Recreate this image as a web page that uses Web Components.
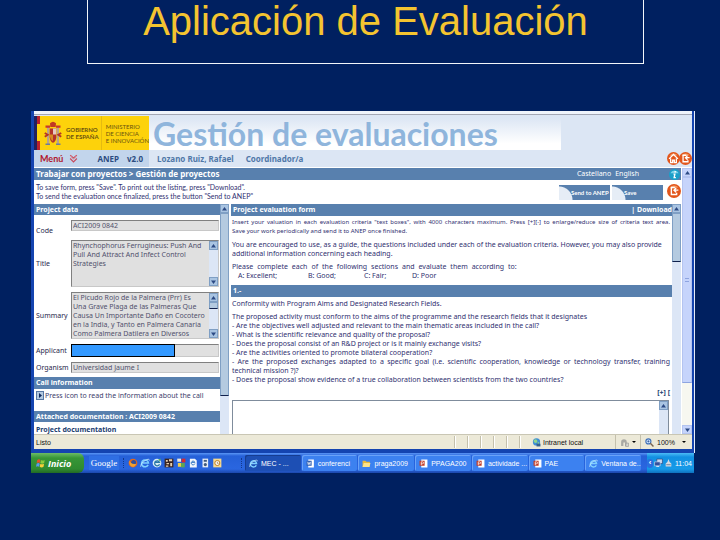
<!DOCTYPE html>
<html lang="es">
<head>
<meta charset="utf-8">
<title>Aplicación de Evaluación</title>
<style>
  body {
    margin: 0;
    min-height: 100vh;
    background: #002060;
    font-family: "Noto Sans", sans-serif;
    overflow: hidden;
  }
</style>
</head>
<body>
<evaluation-slide></evaluation-slide>

<script>
const define = (name, html, setup) => {
  const template = document.createElement('template');
  template.innerHTML = html;
  customElements.define(name, class extends HTMLElement {
    constructor() {
      super();
      this.attachShadow({ mode: 'open' });
      this.shadowRoot.appendChild(template.content.cloneNode(true));
    }
    connectedCallback() {
      if (setup) setup(this, this.shadowRoot);
    }
  });
};

/* ---------- icons ---------- */

const ICONS = {
  home: '<circle cx="8" cy="8" r="8" fill="#e2561b"/><path d="M3 5a6 6 0 0 1 10-1z" fill="#f59a62"/><path d="M2.500 8.500L8 3l5.500 5.500M4.500 8v5H7v-3h2v3h2.500V8" fill="none" stroke="#fff" stroke-width="1.600"/>',
  exit: '<circle cx="8" cy="8" r="8" fill="#e2561b"/><path d="M3 5a6 6 0 0 1 10-1z" fill="#f59a62"/><path d="M9 4H5v8h6v-2M13 7H8m2.500-2.500L8 7l2.500 2.500" fill="none" stroke="#fff" stroke-width="1.600"/>',
  info: '<circle cx="8" cy="8" r="8" fill="#1b9fc9"/><path d="M2 6a6.500 6.500 0 0 1 12 0z" fill="#7fd3ea"/><path d="M9 3v2M6.500 7.500H8.500L7.500 12.500H10" fill="none" stroke="#fff" stroke-width="2"/>',
  globe: '<circle cx="8" cy="7" r="6.500" fill="#3f8fd6"/><path d="M3 4q4-4 6 0t-3 5q-4-1-3-5zM10 8l3-1-1 4-2 1z" fill="#8fd68a"/><path d="M8 10h7v5H8z" fill="#35618f"/>',
  mouse: '<path d="M2 14V7a5 5 0 0 1 10 0v7H9V8H6v6z" fill="#a9a9a4"/><path d="M11 9h4v6h-5z" fill="#d8d8d2" stroke="#888" stroke-width="1"/>',
  lens: '<circle cx="6" cy="6" r="4.500" fill="#cfe6ff" stroke="#4070b8" stroke-width="2"/><path d="M9.500 9.500L15 15" stroke="#7a6450" stroke-width="2.500"/><path d="M6 4v4M4 6h4" stroke="#204890" stroke-width="1.200"/>',
  firefox: '<circle cx="8" cy="8" r="7" fill="#e2661c"/><circle cx="9" cy="7" r="4" fill="#31509c"/><path d="M2 4q3 7 11 5-1 5-6 5-5-1-5-10z" fill="#f3a130"/>',
  ie: '<path d="M13 11a5.500 5.500 0 1 1 .5-3H4" fill="none" stroke="#7fd0ff" stroke-width="2.500"/><path d="M1 14Q0 9 8 4q7-4 7 0" fill="none" stroke="#c8ecff" stroke-width="1.300"/>',
  mail: '<circle cx="8" cy="8" r="7" fill="#d9edf5"/><path d="M12 10a4 4 0 1 1 0-3H5" fill="none" stroke="#2a78a8" stroke-width="2"/><path d="M10 2l4-1-1 5z" fill="#58b058"/>',
  grid: '<path d="M1 1h14v14H1z" fill="#3a2420"/><path d="M3 3h3v3H3zM8 2h5v3H8zM4 8h4v2H4zM10 8h3v5h-3zM3 12h4v2H3z" fill="#e8d0b0"/>',
  puzzle: '<path d="M2 1h6v5H2z" fill="#ece9dc"/><path d="M9 1h6v6H9z" fill="#d8292f"/><path d="M3 8h5v6H3z" fill="#f0cf4a"/><path d="M8 8h6v7H8z" fill="#5fa553"/>',
  page: '<path d="M3 1h8l3 3v11H3z" fill="#f4f7fb"/><path d="M11 9a3 3 0 1 1 0-2H6" fill="none" stroke="#2a70c0" stroke-width="1.500"/>',
  pod: '<path d="M4 1h9v14H4z" fill="#e8edf4"/><path d="M6 3h5v3H6z" fill="#41597c"/><circle cx="8.500" cy="10.500" r="2.500" fill="#41597c"/>',
  outlook: '<path d="M2 1h13v14H2z" fill="#f7d98f"/><circle cx="8.500" cy="8" r="4" fill="#fff" stroke="#b87818" stroke-width="1.500"/><path d="M8.500 6v2.500h2" fill="none" stroke="#805010"/>',
  word: '<path d="M4 1h10v14H4z" fill="#fff"/><path d="M1 3h9v9H1z" fill="#2e5db0"/><path d="M3 5l1 5 1.500-4L7 10l1-5" fill="none" stroke="#fff" stroke-width="1.200"/>',
  folder: '<path d="M1 3h5l2 2h6v9H1z" fill="#e8b93a"/><path d="M3 7h12l-2 7H1z" fill="#fbe28a"/>',
  slides: '<path d="M4 1h11v14H4z" fill="#fff"/><path d="M1 3h9v9H1z" fill="#c23a24"/><path d="M4 11V5h2.500a1.700 1.700 0 0 1 0 3.400H4" fill="none" stroke="#fff" stroke-width="1.300"/>',
  flag: '<path d="M2 3q3-2 5 0L6 8Q4 6 1 8z" fill="#e8502a"/><path d="M8 3q3 2 6 0l-1 5q-3 2-6 0z" fill="#8bcb3c"/><path d="M1 9q3-2 5 0l-1 5q-2-2-5 0z" fill="#5a9af0"/><path d="M7 9q3 2 6 0l-1 5q-3 2-6 0z" fill="#f8cf3a"/>',
  monitors: '<path d="M5 1h10v8H5z" fill="#c8d8f0" stroke="#203068"/><path d="M1 6h10v7H1z" fill="#33509c" stroke="#dce6f8"/><path d="M4 14h5" stroke="#dce6f8" stroke-width="2"/>',
  usb: '<path d="M8 1l2 5 3 3v5H3V9l3-3z" fill="#d4dbe4"/><path d="M4 11h8" stroke="#7e8ca0" stroke-width="2"/>',
  chevrons: '<path d="M2 2l6 5 6-5M2 8l6 6 6-6" fill="none" stroke="#c84a5c" stroke-width="2"/><path d="M4 2v4l4 3 4-3V2" fill="none" stroke="#d98a94" stroke-width="1.500"/>',
  crest: '<path d="M4 4h1.500v12H4zM10.500 4H12v12h-1.500z" fill="#b9a38c"/><path d="M3 3h3v1.500H3zM10 3h3v1.500h-3z" fill="#c9372c"/><path d="M3 15h3v1H3zM10 15h3v1h-3z" fill="#6a7c9c"/><path d="M6 1.500q2-2 4 0L9.800 4H6.200z" fill="#c23a24"/><path d="M5.800 5h4.400v6q-.5 3-2.200 3.500-1.700-.5-2.200-3.500z" fill="#b3322a"/><path d="M8 5h2.200v4H8z" fill="#e6c9c0"/><path d="M5.800 9H8v4.500Q6 12.500 5.800 9z" fill="#d78a20"/><path d="M2.500 8l2 1.200-2 1.300M13.500 8l-2 1.200 2 1.300" fill="none" stroke="#b3322a" stroke-width="1.200"/>',
};

define('ui-icon', `
  <style>
    :host { display: inline-flex; flex: none; width: 10px; height: 10px; }
    svg { width: 100%; height: 100%; display: block; }
  </style>
  <svg viewBox="0 0 16 16" aria-hidden="true"></svg>
`, (el, root) => {
  root.querySelector('svg').innerHTML = ICONS[el.getAttribute('name')] || '';
});

/* ---------- scrollbar ---------- */

// "thumb" is the share of the track the thumb takes, e.g. "80%"
define('scroll-strip', `
  <style>
    :host {
      display: flex;
      flex-direction: column;
      flex: none;
      width: 9px;
      background: var(--track, #dce6f6);
    }
    button {
      flex: none;
      height: 9px;
      padding: 0;
      border: 1px solid var(--edge, #7f9fc4);
      background: var(--face, #a9c4e2);
      display: flex;
      align-items: center;
      justify-content: center;
    }
    svg { width: 5px; height: 4px; }
    .track { flex: 1; min-height: 0; }
    .thumb {
      box-sizing: border-box;
      background: var(--thumb, #b4cae0);
      border: 1px solid var(--edge, #7f9fc4);
      border-bottom-color: var(--thumb-end, #10204c);
      display: flex;
      flex-direction: column;
      align-items: center;
      justify-content: center;
    }
    .thumb::after {
      content: "";
      width: 4px;
      height: 2px;
      border-top: 1px solid #8ea4e0;
      border-bottom: 1px solid #8ea4e0;
      display: var(--grip, none);
    }
  </style>
  <button type="button" aria-label="Subir"><svg viewBox="0 0 5 4"><path d="M0 3.500L2.500 0 5 3.500z" fill="#2c4a84"/></svg></button>
  <div class="track"><div class="thumb"></div></div>
  <button type="button" aria-label="Bajar"><svg viewBox="0 0 5 4"><path d="M0 .5L2.500 4 5 .5z" fill="#2c4a84"/></svg></button>
`, (el, root) => {
  const thumb = root.querySelector('.thumb');
  if (el.hasAttribute('thumb')) thumb.style.height = el.getAttribute('thumb');
  else thumb.remove();
  if (el.hasAttribute('cut')) root.querySelector('button:last-of-type').remove();
});

/* ---------- banner ---------- */

define('gov-logo', `
  <style>
    :host {
      display: flex;
      flex: none;
      align-items: center;
      width: 115px;
      height: 34px;
      background: #fdd20b;
      color: #6b5310;
      font: 6px/7px "Lato", sans-serif;
    }
    .eu { width: 3px; align-self: stretch; background: #23205c; }
    .es { width: 3px; align-self: stretch; background: linear-gradient(#b8202c 25%, #fdd20b 25% 75%, #b8202c 75%); }
    ui-icon { width: 24px; height: 24px; margin: 0 1px; }
    .gov { font-weight: bold; width: 35px; white-space: nowrap; }
    .min { border-left: 1px solid #e5bb10; align-self: stretch; padding-left: 4px; display: flex; align-items: center; white-space: nowrap; }
  </style>
  <span class="eu"></span><span class="es"></span>
  <ui-icon name="crest"></ui-icon>
  <span class="gov">GOBIERNO<br>DE ESPAÑA</span>
  <span class="min"><span>MINISTERIO<br>DE CIENCIA<br>E INNOVACIÓN</span></span>
`);

define('page-banner', `
  <style>
    :host { display: block; background: #dce6f4; border-top: 3px solid #eff4fb; }
    .top { display: flex; align-items: flex-end; height: 36px; border-top: 1px solid #a3a7b4; box-sizing: border-box; }
    h2 {
      margin: 0;
      width: 408px;
      padding-left: 4px;
      font: bold 32px/32px "Lato", sans-serif;
      color: #8fb5dc;
      background: linear-gradient(#dce6f4, #fff 80%);
      white-space: nowrap;
    }
    .bar { display: flex; align-items: center; height: 18px; border-bottom: 1px solid #fff; box-sizing: border-box; font-size: 8px; font-weight: bold; color: #5078a8; }
    .menu { display: flex; align-items: center; box-sizing: border-box; width: 115px; align-self: stretch; background: #c2d5ec; padding: 0 6px; color: #2c4c80; }
    .menu button { display: flex; align-items: center; gap: 6px; border: 0; padding: 0; margin-right: auto; background: none; color: #b0182c; font: bold 9px "Lato", sans-serif; }
    .menu button ui-icon { width: 9px; height: 9px; }
    .menu span + span { margin-left: 8px; }
    .user { padding-left: 8px; }
    .role { padding-left: 12px; }
    .tools { margin-left: auto; display: flex; padding-right: 1px; }
    .tools a, .tools ui-icon { display: block; width: 13px; height: 13px; }
    .tools a { width: 12px; }
  </style>
  <div class="top"><gov-logo></gov-logo><h2>Gestión de evaluaciones</h2></div>
  <div class="bar">
    <div class="menu"><button type="button">Menú <ui-icon name="chevrons"></ui-icon></button><span>ANEP</span><span>v2.0</span></div>
    <span class="user">Lozano Ruiz, Rafael</span><span class="role">Coordinador/a</span>
    <div class="tools">
      <a href="#home" aria-label="Inicio"><ui-icon name="home"></ui-icon></a>
      <a href="#exit" aria-label="Salir"><ui-icon name="exit"></ui-icon></a>
    </div>
  </div>
`);

define('crumb-bar', `
  <style>
    :host { display: flex; align-items: center; height: 12px; background: #5880ae; color: #fff; font-size: 8px; line-height: 12px; padding: 0 1px 0 2px; }
    b { flex: 1; }
    a { color: #fff; text-decoration: none; margin-right: 4px; font-size: 7px; }
    ui-icon { width: 11px; height: 11px; margin-left: 26px; }
  </style>
  <b>Trabajar con proyectos &gt; Gestión de proyectos</b>
  <a href="#es">Castellano</a><a href="#en">English</a>
  <ui-icon name="info"></ui-icon>
`);

define('action-bar', `
  <style>
    :host { display: flex; align-items: center; height: 24px; color: #303070; font: 7px/9px "Lato", sans-serif; }
    p { flex: 1; margin: 0; padding: 0 0 0 2px; }
    button {
      width: 51px;
      height: 15px;
      margin-right: 2px;
      padding: 0 0 0 12px;
      border: 0;
      color: #fff;
      font: bold 6px/15px "Lato", sans-serif;
      text-align: left;
      white-space: nowrap;
      background: radial-gradient(circle at 0 100%, #e6edf6 13px, #5880ae 14px);
    }
    ui-icon { width: 14px; height: 14px; margin: 0 0 3px 2px; }
  </style>
  <p>To save form, press "Save". To print out the listing, press "Download".<br>To send the evaluation once finalized, press the button "Send to ANEP"</p>
  <button type="button">Send to ANEP</button>
  <button type="button">Save</button>
  <ui-icon name="exit"></ui-icon>
`);

/* ---------- panels ---------- */

define('panel-heading', `
  <style>
    :host { display: flex; justify-content: space-between; background: #5880ae; color: #fff; font-weight: bold; font-size: 7px; line-height: 12px; padding: 0 0 0 2px; white-space: nowrap; overflow: hidden; }
  </style>
  <slot></slot>
`);

define('form-field', `
  <style>
    :host { display: flex; align-items: center; padding: 0 1px 0 2px; color: #28284c; }
    label { flex: none; width: 35px; }
    .box { flex: 1; min-width: 0; display: flex; background: #e0e0e0; border: 1px solid #c8c8c8; border-top-color: #808080; border-left-color: #808080; }
    input, textarea {
      flex: 1;
      min-width: 0;
      box-sizing: border-box;
      margin: 0;
      padding: 0 0 0 1px;
      border: 0;
      background: none;
      color: #50506c;
      font: inherit;
      line-height: 9px;
    }
    input { height: 9px; }
    textarea { height: 45px; resize: none; overflow: hidden; white-space: pre; }
    .masked { background: #3399ff; outline: 1px solid #000; width: 70%; flex: none; height: 11px; }
    :host([low]) label { padding-top: 10px; }
  </style>
  <label for="f"></label>
  <div class="box"></div>
`, (el, root) => {
  const kind = el.getAttribute('kind') || 'input';
  const box = root.querySelector('.box');
  root.querySelector('label').textContent = el.getAttribute('label');
  const field = document.createElement(kind === 'area' ? 'textarea' : 'input');
  field.id = 'f';
  field.value = el.getAttribute('value') || '';
  if (kind === 'masked') field.className = 'masked';
  box.appendChild(field);
  if (kind === 'area') {
    const strip = document.createElement('scroll-strip');
    if (el.hasAttribute('thumb')) strip.setAttribute('thumb', el.getAttribute('thumb'));
    box.appendChild(strip);
  }
});

define('project-data', `
  <style>
    :host { display: flex; flex-direction: column; flex: 0 0 186px; min-width: 0; overflow: hidden; font-size: 7px; line-height: 9px; }
    .fields { display: flex; flex-direction: column; gap: 5px; padding: 1px 0 4px; }
    .call { display: flex; align-items: center; gap: 1px; padding: 2px 2px 11px; color: #40406c; }
    .call button { width: 8px; height: 9px; padding: 0; border: 1px solid #5878a4; background: #b4cae0; display: flex; align-items: center; justify-content: center; }
    .call svg { width: 3px; height: 5px; }
    h4 { margin: 0; padding: 3px 2px 0; font-size: 7px; line-height: 9px; color: #1c4070; }
  </style>
  <panel-heading>Project data</panel-heading>
  <div class="fields">
    <form-field low label="Code" value="ACI2009 0842"></form-field>
    <form-field kind="area" label="Title" value="Rhynchophorus Ferrugineus: Push And
Pull And Attract And Infect Control
Strategies"></form-field>
    <form-field kind="area" thumb="25%" label="Summary" value="El Picudo Rojo de la Palmera (Prr) Es
Una Grave Plaga de las Palmeras Que
Causa Un Importante Daño en Cocotero
en la India, y Tanto en Palmera Canaria
Como Palmera Datilera en Diversos"></form-field>
    <form-field kind="masked" label="Applicant"></form-field>
    <form-field label="Organism" value="Universidad Jaume I"></form-field>
  </div>
  <panel-heading>Call information</panel-heading>
  <div class="call">
    <button type="button" aria-label="Open"><svg viewBox="0 0 3 5"><path d="M0 0l3 2.500L0 5z" fill="#10285c"/></svg></button>
    Press icon to read the information about the call
  </div>
  <panel-heading>Attached documentation : ACI2009 0842</panel-heading>
  <h4>Project documentation</h4>
`);

define('evaluation-form', `
  <style>
    :host { display: flex; flex-direction: column; flex: 1; min-width: 0; overflow: hidden; font-size: 7px; line-height: 9px; color: #303070; }
    p { margin: 0 0 4px; padding: 0 2px 0 1px; white-space: nowrap; }
    p.last { margin: 0; }
    .intro { padding-top: 2px; }
    .tight { font-size: 6px; }
    .fill { display: block; text-align: justify; text-align-last: justify; }
    .short { width: 65%; }
    .grades { display: flex; padding: 0 7px 5px; }
    .grades span { flex: 0 0 56px; }
    .grades span:first-child { flex-basis: 70px; }
    .grades span:nth-child(3) { flex-basis: 48px; }
    .body { padding-top: 2px; }
    .size { align-self: flex-end; margin: 4px 2px 0 0; border: 0; padding: 0; background: none; color: #1c4070; font: bold 7px/9px "Noto Sans", sans-serif; }
    .answer { flex: 1; min-height: 0; display: flex; margin: 3px 3px 0 1px; border: 1px solid #7f8c9c; border-bottom: 0; }
    textarea { flex: 1; min-width: 0; border: 0; padding: 0; resize: none; overflow: hidden; background: #fff; }
    a { color: #fff; text-decoration: none; }
  </style>
  <panel-heading><span>Project evaluation form</span><a href="#download">| Download</a></panel-heading>
  <div class="intro">
    <p class="tight"><span class="fill">Insert your valuation in each evaluation criteria "text boxes", with 4000 characters maximum. Press [+][-] to enlarge/reduce size of criteria text area.</span>Save your work periodically and send it to ANEP once finished.</p>
    <p>You are encouraged to use, as a guide, the questions included under each of the evaluation criteria. However, you may also provide<br>additional information concerning each heading.</p>
    <p class="last"><span class="fill short">Please complete each of the following sections and evaluate them according to:</span></p>
    <div class="grades"><span>A: Excellent;</span><span>B: Good;</span><span>C: Fair;</span><span>D: Poor</span></div>
  </div>
  <panel-heading>1.-</panel-heading>
  <div class="body">
    <p>Conformity with Program Aims and Designated Research Fields.</p>
    <p class="last">The proposed activity must conform to the aims of the programme and the research fields that it designates<br>
    - Are the objectives well adjusted and relevant to the main thematic areas included in the call?<br>
    - What is the scientific relevance and quality of the proposal?<br>
    - Does the proposal consist of an R&amp;D project or is it mainly exchange visits?<br>
    - Are the activities oriented to promote bilateral cooperation?<br>
    <span class="fill">- Are the proposed exchanges adapted to a specific goal (i.e. scientific cooperation, knowledge or technology transfer, training</span>
    technical mission ?)?<br>
    - Does the proposal show evidence of a true collaboration between scientists from the two countries?</p>
  </div>
  <button class="size" type="button">[+] [</button>
  <div class="answer"><textarea aria-label="1.-"></textarea><scroll-strip cut></scroll-strip></div>
`);

/* ---------- browser window ---------- */

define('status-bar', `
  <style>
    :host { display: flex; align-items: center; height: 15px; padding: 0 2px; background: #ece9d8; border-top: 1px solid #c9c6b4; box-sizing: border-box; color: #101010; font: 7px/9px "Liberation Sans", sans-serif; }
    .cells { flex: 1; display: flex; justify-content: flex-end; align-self: stretch; padding: 1px 0; }
    .cells i { width: 12px; border-left: 1px solid #c4c0ac; box-shadow: inset 1px 0 #fff; }
    .zone { width: 83px; display: flex; gap: 2px; align-items: center; }
    .item { display: flex; align-items: center; gap: 3px; padding-left: 4px; border-left: 1px solid #c4c0ac; align-self: stretch; }
    .item:last-child { width: 45px; margin-left: 4px; }
    .arrow { border: 2px solid transparent; border-top-color: #000; margin-top: 2px; }
    .item:last-child .arrow { margin-left: 4px; }
    ui-icon { width: 9px; height: 9px; }
  </style>
  <span>Listo</span>
  <div class="cells"><i></i><i></i><i></i><i></i><i></i><i></i></div>
  <div class="zone"><ui-icon name="globe"></ui-icon>Intranet local</div>
  <div class="item"><ui-icon name="mouse"></ui-icon><span class="arrow"></span></div>
  <div class="item"><ui-icon name="lens"></ui-icon>100%<span class="arrow"></span></div>
`);

define('browser-window', `
  <style>
    :host { display: block; border: solid #1444b0; border-width: 0 2px 4px 3px; box-shadow: 1px 0 #e8eefa; background: #fff; }
    .main { display: flex; }
    .content { flex: 1; min-width: 0; }
    .panes { display: flex; height: 230px; }
    .outer { --track: #f7f7f0; --face: #c6d4fb; --edge: #b4c4f0; --thumb: #c6d4fb; --thumb-end: #8ea4e0; --grip: block; width: 10px; margin-left: 1px; }
    .left { margin-right: 2px; }
  </style>
  <page-banner></page-banner>
  <div class="main">
    <div class="content">
      <crumb-bar></crumb-bar>
      <action-bar></action-bar>
      <div class="panes">
        <project-data></project-data>
        <scroll-strip class="left" thumb="83%" cut></scroll-strip>
        <evaluation-form></evaluation-form>
        <scroll-strip thumb="22%" cut></scroll-strip>
      </div>
    </div>
    <scroll-strip class="outer" thumb="83%"></scroll-strip>
  </div>
  <status-bar></status-bar>
`);

/* ---------- taskbar ---------- */

define('task-button', `
  <style>
    :host { display: block; flex: 1; min-width: 0; }
    button { display: flex; align-items: center; gap: 3px; width: 100%; height: 16px; padding: 0 4px; border: 0; border-radius: 2px; background: #3c81f0; box-shadow: inset 1px 1px #6aa2f8; color: #fff; font: 7px "Liberation Sans", sans-serif; white-space: nowrap; overflow: hidden; }
    :host([active]) button { background: #1d4fb4; box-shadow: inset 1px 1px #163d90; }
    ui-icon { width: 9px; height: 9px; }
  </style>
  <button type="button"><ui-icon></ui-icon><slot></slot></button>
`, (el, root) => {
  const icon = document.createElement('ui-icon');
  icon.setAttribute('name', el.getAttribute('icon'));
  root.querySelector('ui-icon').replaceWith(icon);
});

define('task-bar', `
  <style>
    :host { display: flex; align-items: center; height: 20px; background: linear-gradient(#5a96f6, #2560d8 15%, #2a66e0 80%, #1c48ac); color: #fff; }
    .start { align-self: stretch; width: 53px; padding: 0 0 0 5px; border: 0; border-radius: 0 6px 6px 0; background: linear-gradient(#6cbc66, #379637 25%, #2f8a30 80%, #226a24); color: #fff; display: flex; align-items: center; gap: 2px; font: italic bold 9px "Open Sans", sans-serif; }
    .google { margin-left: 5px; width: 30px; line-height: 14px; text-align: center; background: #2f6fe4; font-family: "Liberation Serif", serif; font-size: 9px; color: #fff; text-decoration: none; }
    .quick { display: flex; gap: 2px; width: 113px; margin: 0 3px 0 4px; padding-left: 4px; border-left: 1px dotted #12388c; border-right: 1px dotted #12388c; box-sizing: content-box; }
    .tasks { flex: 1; display: flex; gap: 1px; min-width: 0; }
    .tray { margin-left: 6px; align-self: stretch; width: 47px; display: flex; align-items: center; gap: 1px; background: linear-gradient(#4cbcf6, #1290e2 20%, #169ae8 80%, #0f70bc); font: 7px "Liberation Sans", sans-serif; }
    .tray button { width: 6px; height: 9px; padding: 0; border: 0; border-radius: 4px; background: #2a6ee0; color: #fff; font: bold 8px/8px "Liberation Sans", sans-serif; }
    .tray ui-icon { width: 9px; }
    time { margin-left: 1px; }
  </style>
  <button class="start" type="button"><ui-icon name="flag"></ui-icon>Inicio</button>
  <a class="google" href="#google">Google</a>
  <div class="quick">
    <ui-icon name="firefox"></ui-icon><ui-icon name="ie"></ui-icon><ui-icon name="mail"></ui-icon><ui-icon name="grid"></ui-icon>
    <ui-icon name="puzzle"></ui-icon><ui-icon name="page"></ui-icon><ui-icon name="pod"></ui-icon><ui-icon name="outlook"></ui-icon>
  </div>
  <div class="tasks">
    <task-button icon="ie" active>MEC - ...</task-button>
    <task-button icon="word">conferenci</task-button>
    <task-button icon="folder">praga2009</task-button>
    <task-button icon="slides">PPAGA200</task-button>
    <task-button icon="slides">actividade ...</task-button>
    <task-button icon="slides">PAE</task-button>
    <task-button icon="ie">Ventana de..</task-button>
  </div>
  <div class="tray"><button type="button" aria-label="Mostrar">‹</button><ui-icon name="monitors"></ui-icon><ui-icon name="usb"></ui-icon><time>11:04</time></div>
`);

define('evaluation-slide', `
  <style>
    :host { display: block; }
    h1 {
      margin: 0 76px 47px 87px;
      height: 63px;
      border: 1px solid #f2f6fa;
      border-top: 0;
      text-align: center;
      font: 40px/42px "Liberation Sans", sans-serif;
      color: #f4c430;
      white-space: nowrap;
    }
    .shot { margin: 0 26px 0 31px; }
  </style>
  <h1>Aplicación de Evaluación</h1>
  <div class="shot">
    <browser-window></browser-window>
    <task-bar></task-bar>
  </div>
`);
</script>
</body>
</html>
